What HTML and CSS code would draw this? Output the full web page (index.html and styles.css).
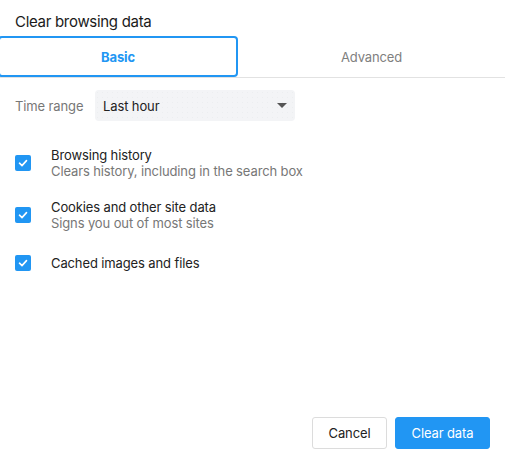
FILE: index.html
```html
<!DOCTYPE html>
<html>
<head>
<meta charset="utf-8">
<link rel="stylesheet" href="styles.css">
</head>
<body>
<div class="dialog">
  <h1 class="title">Clear browsing data</h1>
  <div class="tabs">
    <div class="tab tab-active">Basic</div>
    <div class="tab">Advanced</div>
  </div>
  <div class="content">
    <div class="range-row">
      <span class="range-label">Time range</span>
      <div class="select">
        <span>Last hour</span>
        <span class="arrow"></span>
      </div>
    </div>
    <div class="options">
      <div class="option">
        <span class="checkbox"><svg viewBox="0 0 16 16" width="16" height="16"><path d="M4.5 8.2 L7 10.6 L11.5 5.6" fill="none" stroke="#fff" stroke-width="1.6" stroke-linecap="round" stroke-linejoin="round"/></svg></span>
        <div class="option-text">
          <div class="option-title">Browsing history</div>
          <div class="option-sub">Clears history, including in the search box</div>
        </div>
      </div>
      <div class="option">
        <span class="checkbox"><svg viewBox="0 0 16 16" width="16" height="16"><path d="M4.5 8.2 L7 10.6 L11.5 5.6" fill="none" stroke="#fff" stroke-width="1.6" stroke-linecap="round" stroke-linejoin="round"/></svg></span>
        <div class="option-text">
          <div class="option-title">Cookies and other site data</div>
          <div class="option-sub">Signs you out of most sites</div>
        </div>
      </div>
      <div class="option">
        <span class="checkbox"><svg viewBox="0 0 16 16" width="16" height="16"><path d="M4.5 8.2 L7 10.6 L11.5 5.6" fill="none" stroke="#fff" stroke-width="1.6" stroke-linecap="round" stroke-linejoin="round"/></svg></span>
        <div class="option-text">
          <div class="option-title">Cached images and files</div>
        </div>
      </div>
    </div>
  </div>
  <div class="footer">
    <button class="btn btn-cancel">Cancel</button>
    <button class="btn btn-primary">Clear data</button>
  </div>
</div>
</body>
</html>
```

FILE: styles.css
```css
html, body {
  margin: 0;
  padding: 0;
  background: #fff;
}
body {
  font-family: Inter, "Noto Sans", sans-serif;
  color: #222;
  overflow: hidden;
  letter-spacing: -0.12px;
}
.dialog {
  width: 505px;
  height: 461px;
  display: flex;
  flex-direction: column;
}
.title {
  margin: 0;
  padding: 13px 15px 0;
  font-size: 15px;
  line-height: 18px;
  font-weight: 400;
  letter-spacing: -0.3px;
  color: #1a1a1a;
  margin-bottom: 5px;
}
.tabs {
  display: flex;
  border-bottom: 1px solid #e2e2e2;
}
.tab {
  flex: 1;
  height: 41px;
  box-sizing: border-box;
  display: flex;
  align-items: center;
  justify-content: center;
  font-size: 13px;
  color: #808080;
}
.tab-active {
  flex: 0 0 240px;
  margin-left: -2px;
  border: 2px solid #2196f3;
  border-radius: 4px;
  color: #2196f3;
  font-weight: 700;
}
.content {
  flex: 1;
  padding: 12px 15px 0;
}
.range-row {
  display: flex;
  align-items: center;
}
.range-label {
  width: 80px;
  font-size: 13px;
  color: #777;
}
.select {
  width: 200px;
  height: 31px;
  box-sizing: border-box;
  background-color: #f3f4f6;
  background-image: radial-gradient(circle, #eceef0 0.6px, transparent 0.8px);
  background-size: 5px 5px;
  border-radius: 4px;
  display: flex;
  align-items: center;
  justify-content: space-between;
  padding: 0 8px 0 8px;
  font-size: 13px;
  color: #222;
}
.arrow {
  width: 0;
  height: 0;
  border-left: 5px solid transparent;
  border-right: 5px solid transparent;
  border-top: 5px solid #555;
}
.options {
  margin-top: 16px;
}
.option {
  display: flex;
  align-items: center;
  padding: 10px 0;
  min-height: 24px;
}
.checkbox {
  width: 16px;
  height: 16px;
  background: #2196f3;
  border-radius: 2px;
  flex: 0 0 16px;
  margin-right: 20px;
  display: flex;
}
.option-title {
  font-size: 13px;
  line-height: 16px;
  color: #222;
}
.option-sub {
  font-size: 13px;
  line-height: 16px;
  color: #777;
}
.footer {
  display: flex;
  justify-content: flex-end;
  gap: 8px;
  padding: 0 15px 12px;
}
.btn {
  height: 32px;
  box-sizing: border-box;
  font-family: Inter, "Noto Sans", sans-serif;
  font-size: 13px;
  letter-spacing: -0.12px;
  border-radius: 3px;
  cursor: pointer;
}
.btn-cancel {
  width: 75px;
  background: #fff;
  border: 1px solid #dcdcdc;
  color: #222;
}
.btn-primary {
  width: 95px;
  background: #2196f3;
  border: 1px solid #2196f3;
  color: #fff;
}
```
